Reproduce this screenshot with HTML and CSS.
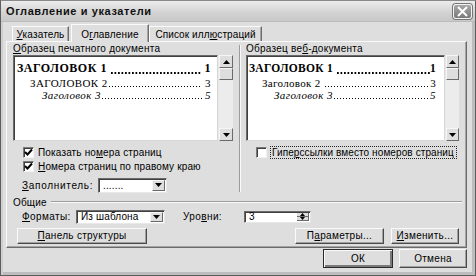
FILE: index.html
```html
<!DOCTYPE html>
<html lang="ru">
<head>
<meta charset="utf-8">
<title>Оглавление и указатели</title>
<link rel="stylesheet" href="styles.css">
</head>
<body>
<div class="dialog">
  <div class="titlebar">
    <span class="title">Оглавление и указатели</span>
    <span class="close"><svg width="13" height="11" viewBox="0 0 13 11"><path d="M2 1 L11 10 M11 1 L2 10" stroke="#fff" stroke-width="2"/></svg></span>
  </div>
  <div class="tabs">
    <div class="tab t1"><u>У</u>казатель</div>
    <div class="tab active">О<u>г</u>лавление</div>
    <div class="tab t3">Список илл<u>ю</u>страций</div>
  </div>
  <div class="panel">
    <div class="upper">
      <div class="col">
        <div class="label"><u>О</u>бразец печатного документа</div>
        <div class="preview-row">
          <div class="preview print">
            <div class="toc l1"><span>ЗАГОЛОВОК 1&nbsp;</span><span class="dots"></span><span>&nbsp;1</span></div>
            <div class="toc l2"><span>ЗАГОЛОВОК 2</span><span class="dots"></span><span>&nbsp;3</span></div>
            <div class="toc l3"><span>Заголовок 3</span><span class="dots"></span><span>&nbsp;5</span></div>
          </div>
          <div class="scrollbar">
            <div class="sbtn"><svg width="7" height="4" viewBox="0 0 7 4"><path d="M0 4 L3.5 0 L7 4Z" fill="#000"/></svg></div>
            <div class="thumb"></div>
            <div class="track"></div>
            <div class="sbtn"><svg width="7" height="4" viewBox="0 0 7 4"><path d="M0 0 L3.5 4 L7 0Z" fill="#000"/></svg></div>
          </div>
        </div>
        <div class="check-row first"><span class="cb"><svg width="9" height="9" viewBox="0 0 9 9"><path d="M1 4 L3.5 6.5 L8 1.5" stroke="#000" stroke-width="2" fill="none"/></svg></span><span>Показать но<u>м</u>ера страниц</span></div>
        <div class="check-row"><span class="cb"><svg width="9" height="9" viewBox="0 0 9 9"><path d="M1 4 L3.5 6.5 L8 1.5" stroke="#000" stroke-width="2" fill="none"/></svg></span><span><u>Н</u>омера страниц по правому краю</span></div>
        <div class="fill-row">
          <span class="fill-label"><u>З</u>аполнитель:</span>
          <div class="combo small"><span class="combo-text">.......</span><span class="drop"><svg width="7" height="4" viewBox="0 0 7 4"><path d="M0 0 L3.5 4 L7 0Z" fill="#000"/></svg></span></div>
        </div>
      </div>
      <div class="divider"></div>
      <div class="col">
        <div class="label">Образец ве<u>б</u>-документа</div>
        <div class="preview-row">
          <div class="preview web">
            <div class="toc l1"><span>ЗАГОЛОВОК 1&nbsp;</span><span class="dots"></span><span>1</span></div>
            <div class="toc l2"><span>Заголовок 2&nbsp;</span><span class="dots"></span><span>3</span></div>
            <div class="toc l3"><span>Заголовок 3</span><span class="dots"></span><span>5</span></div>
          </div>
          <div class="scrollbar">
            <div class="sbtn"><svg width="7" height="4" viewBox="0 0 7 4"><path d="M0 4 L3.5 0 L7 4Z" fill="#000"/></svg></div>
            <div class="thumb"></div>
            <div class="track"></div>
            <div class="sbtn"><svg width="7" height="4" viewBox="0 0 7 4"><path d="M0 0 L3.5 4 L7 0Z" fill="#000"/></svg></div>
          </div>
        </div>
        <div class="check-row first"><span class="cb"></span><span class="focus">Гипе<u>р</u>ссылки вместо номеров страниц</span></div>
      </div>
    </div>
    <div class="group-head"><span>Общие</span><span class="line"></span></div>
    <div class="formats-row">
      <span class="fmt-label"><u>Ф</u>орматы:</span>
      <div class="combo wide"><span class="combo-text">Из шаблона</span><span class="drop"><svg width="7" height="4" viewBox="0 0 7 4"><path d="M0 0 L3.5 4 L7 0Z" fill="#000"/></svg></span></div>
      <span class="lvl-label">Уро<u>в</u>ни:</span>
      <div class="spin"><span class="combo-text">3</span><span class="spin-btns"><span class="sp"><svg width="5" height="3" viewBox="0 0 5 3"><path d="M0 3 L2.5 0 L5 3Z" fill="#000"/></svg></span><span class="sp"><svg width="5" height="3" viewBox="0 0 5 3"><path d="M0 0 L2.5 3 L5 0Z" fill="#000"/></svg></span></span></div>
    </div>
    <div class="buttons-row">
      <button class="btn outline"><u>П</u>анель структуры</button>
      <span class="spacer"></span>
      <button class="btn params">П<u>а</u>раметры...</button>
      <button class="btn change"><u>И</u>зменить...</button>
    </div>
  </div>
  <div class="footer">
    <button class="btn ok">ОК</button>
    <button class="btn cancel">Отмена</button>
  </div>
</div>
</body>
</html>
```

FILE: styles.css
```css
* { box-sizing: border-box; }
html, body { margin: 0; padding: 0; }
body {
  width: 476px;
  height: 276px;
  overflow: hidden;
  background: #dcdcdc;
  font-family: "Liberation Sans", Arial, sans-serif;
  font-size: 10px;
  letter-spacing: 0.15px;
  color: #000;
}
u { text-decoration: underline; text-underline-offset: 1px; }

.dialog {
  width: 476px;
  height: 276px;
  border: 1px solid #5e5e5e;
  border-top-color: #8a8a8a;
  background: #dedede;
  display: flex;
  flex-direction: column;
  box-shadow: inset 2px 0 0 #cfcfcf, inset -3px -3px 0 #bdbdbd;
}

.titlebar {
  height: 21px;
  flex: none;
  display: flex;
  align-items: center;
  justify-content: space-between;
  padding: 0 3px 0 5px;
  background: linear-gradient(#ececec, #d2d2d2 60%, #c8c8c8);
  border-bottom: 1px solid #bcbcbc;
}
.title {
  font-weight: bold;
  font-size: 11px;
  letter-spacing: 0.6px;
  color: #111;
}
.close {
  width: 19px;
  height: 15px;
  border-radius: 3px;
  background: linear-gradient(#a8a8a8, #7a7a7a);
  border: 1px solid #f2f2f2;
  box-shadow: 0 0 0 1px #777;
  display: flex;
  align-items: center;
  justify-content: center;
}

.tabs {
  display: flex;
  align-items: flex-end;
  height: 18px;
  padding-left: 11px;
  flex: none;
  margin-top: 1px;
  position: relative;
  z-index: 1;
}
.tab {
  height: 15px;
  padding: 1px 0 0 0;
  border: 1px solid #fafafa;
  border-right-color: #6d6d6d;
  border-bottom: none;
  box-shadow: inset -1px 0 0 #a5a5a5;
  background: #dedede;
  line-height: 13px;
  white-space: nowrap;
  text-align: center;
}
.tab.t1 { width: 57px; }
.tab.active {
  height: 18px;
  width: 78px;
  padding-top: 3px;
  margin: 0 -1px -1px 2px;
}
.tab.t3 { width: 113px; margin-left: 1px; letter-spacing: 0.1px; }

.panel {
  margin: 0 8px 0 5px;
  height: 207px;
  border: 1px solid #fafafa;
  border-right-color: #6a6a6a;
  border-bottom-color: #6a6a6a;
  box-shadow: inset -1px -1px 0 #a5a5a5;
  padding: 1px 6px 0 6px;
  display: flex;
  flex-direction: column;
  flex: none;
}

.upper {
  display: grid;
  grid-template-columns: 220px 1px 213px;
  column-gap: 6px;
  height: 151px;
}
.divider {
  border-left: 1px solid #9c9c9c;
  border-right: 1px solid #fafafa;
  width: 2px;
  margin-top: 2px;
  height: 147px;
}
.label {
  height: 12px;
  line-height: 12px;
  letter-spacing: 0.25px;
  white-space: nowrap;
}
.preview-row {
  display: flex;
  height: 86px;
}
.preview {
  background: #fff;
  border: 1px solid #6a6a6a;
  border-right-color: #d8d8d8;
  border-bottom-color: #d8d8d8;
  box-shadow: inset 1px 1px 0 #404040;
  padding-top: 5px;
  font-family: "Liberation Serif", "Times New Roman", serif;
  overflow: hidden;
}
.preview.print { width: 205px; padding-left: 3px; padding-right: 6px; }
.preview.web { width: 199px; padding-left: 2px; padding-right: 8px; }

.toc {
  display: flex;
  white-space: nowrap;
}
.toc span { flex: none; }
.toc .dots {
  flex: 1 1 auto;
  min-width: 0;
  background-image: linear-gradient(to right, #000 1px, transparent 1px);
  background-size: 3px 1px;
  background-repeat: repeat-x;
  background-position: 1px calc(100% - 3px);
}
.toc.l1 { font-weight: bold; font-size: 12px; letter-spacing: 0.5px; height: 15px; line-height: 15px; margin-bottom: 1px; }
.toc.l1 .dots { background-image: linear-gradient(to right, #000 1.5px, transparent 1.5px); background-size: 3.5px 1.5px; background-position: 1px calc(100% - 3px); }
.toc.l2 { font-size: 11px; letter-spacing: 0.4px; height: 12px; line-height: 12px; padding-left: 13px; }
.toc.l3 { font-size: 11px; font-style: italic; letter-spacing: 0.4px; height: 12px; line-height: 12px; padding-left: 25px; }
.toc.l2 .dots, .toc.l3 .dots { background-position: 1px calc(100% - 2px); }
.preview.web .toc.l1 { font-size: 11.5px; letter-spacing: 0.3px; }
.preview.web .toc.l2 { letter-spacing: 0.3px; }

.scrollbar {
  width: 15px;
  display: flex;
  flex-direction: column;
  background: #ececec;
  border-left: 1px solid #e8e8e8;
}
.preview.web + .scrollbar { width: 14px; }
.sbtn, .thumb {
  height: 13px;
  background: #dedede;
  border: 1px solid #f6f6f6;
  border-right-color: #6a6a6a;
  border-bottom-color: #6a6a6a;
  display: flex;
  align-items: center;
  justify-content: center;
  flex: none;
}
.thumb { height: 12px; }
.track { flex: 1; }

.check-row {
  display: flex;
  align-items: center;
  height: 14px;
  padding-left: 10px;
  gap: 4px;
  white-space: nowrap;
}
.check-row.first { margin-top: 4px; }
.cb {
  width: 11px;
  height: 11px;
  background: #fff;
  border: 1px solid #7a7a7a;
  border-right-color: #f2f2f2;
  border-bottom-color: #f2f2f2;
  box-shadow: inset 1px 1px 0 #404040;
  display: flex;
  align-items: center;
  justify-content: center;
  flex: none;
}
.focus {
  outline: 1px dotted #222;
  padding: 0 2px 0 1px;
  line-height: 11px;
  letter-spacing: 0.1px;
}

.fill-row {
  display: flex;
  align-items: center;
  margin-top: 4px;
  height: 16px;
  padding-left: 9px;
}
.fill-label { width: 76px; letter-spacing: 0.7px; }

.combo, .spin {
  display: flex;
  align-items: center;
  background: #fff;
  border: 1px solid #6a6a6a;
  border-right-color: #e8e8e8;
  border-bottom-color: #e8e8e8;
  box-shadow: inset 1px 1px 0 #404040;
  padding: 1px;
}
.combo.small { width: 69px; height: 15px; }
.combo.wide { width: 89px; height: 14px; }
.combo-text { flex: 1; padding-left: 3px; line-height: 11px; }
.drop {
  width: 13px;
  height: 100%;
  background: #dedede;
  border: 1px solid #f6f6f6;
  border-right-color: #6a6a6a;
  border-bottom-color: #6a6a6a;
  display: flex;
  align-items: center;
  justify-content: center;
}

.group-head {
  display: flex;
  align-items: center;
  height: 12px;
  margin-top: 2px;
  margin-right: -2px;
  gap: 4px;
}
.group-head .line {
  flex: 1;
  border-top: 1px solid #9c9c9c;
  border-bottom: 1px solid #fafafa;
}

.formats-row {
  display: flex;
  align-items: center;
  height: 15px;
  margin-top: 1px;
  padding-left: 9px;
}
.fmt-label { width: 54px; letter-spacing: 0.4px; }
.lvl-label { margin-left: 18px; width: 61px; letter-spacing: 0.4px; }
.spin { width: 67px; height: 12px; }
.spin-btns { display: flex; flex-direction: column; height: 100%; width: 12px; }
.sp {
  flex: 1;
  background: #dedede;
  border: solid #6a6a6a;
  border-width: 0 1px 1px 0;
  display: flex;
  align-items: center;
  justify-content: center;
}

.buttons-row {
  display: flex;
  margin-top: 4px;
  height: 16px;
  padding-left: 4px;
}
.spacer { flex: 1; }
.btn {
  font-family: "Liberation Sans", Arial, sans-serif;
  font-size: 10px;
  letter-spacing: 0.3px;
  color: #000;
  background: #dedede;
  border: 1px solid #fafafa;
  border-right-color: #4a4a4a;
  border-bottom-color: #4a4a4a;
  box-shadow: inset -1px -1px 0 #a0a0a0;
  padding: 0;
  height: 16px;
  line-height: 12px;
}
.btn.outline { width: 130px; }
.btn.params { width: 89px; }
.btn.change { width: 68px; margin-left: 7px; margin-right: 1px; }

.footer {
  display: flex;
  justify-content: flex-end;
  gap: 6px;
  margin-top: 1px;
  padding-right: 8px;
}
.btn.ok {
  width: 70px;
  height: 19px;
  border: 1px solid #2a2a2a;
  box-shadow: inset 1px 1px 0 #fafafa, inset -2px -2px 0 #7a7a7a;
}
.btn.cancel { width: 68px; height: 19px; }
```
